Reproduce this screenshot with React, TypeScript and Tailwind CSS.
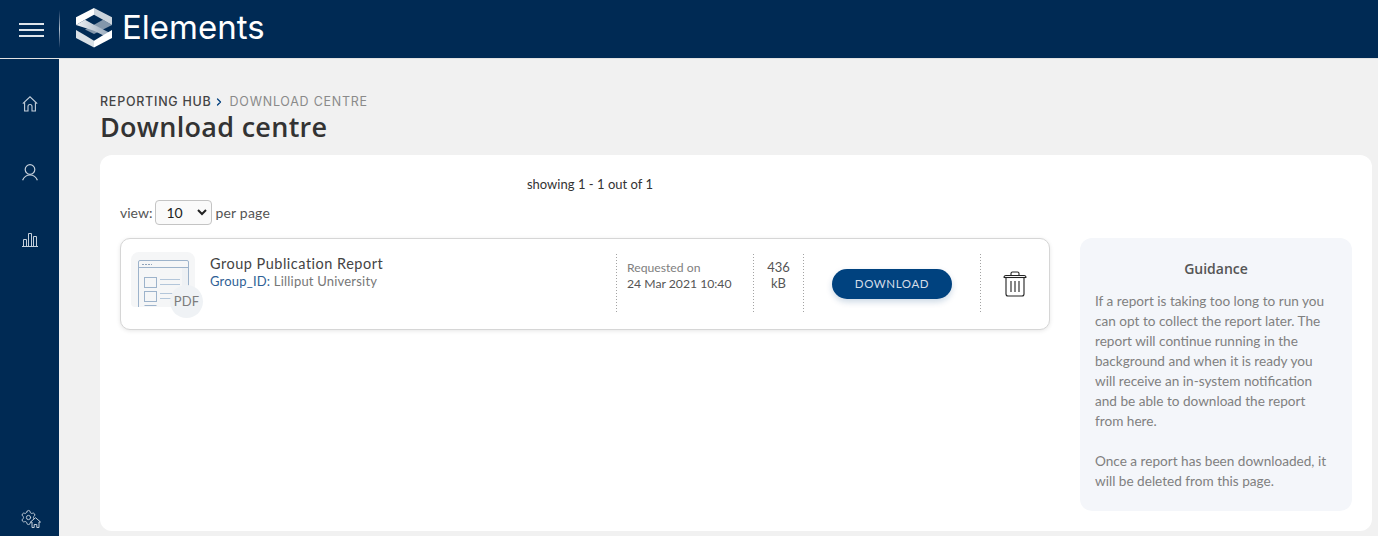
import React from 'react';
import { ChevronRight, Settings } from 'lucide-react';

const Logo = () => (
  <svg width="36" height="40" viewBox="0 0 36 40" className="shrink-0">
    <defs>
      <linearGradient id="band" x1="0" x2="1" y1="0" y2="0">
        <stop offset="0" stopColor="#f2f4f6" />
        <stop offset="1" stopColor="#8fa2b6" />
      </linearGradient>
    </defs>
    <path d="M36 17 L27 11.7 L18 16.7 L9 21.5 L18 26 Z" fill="#8397ab" />
    <path d="M18 0 L0 9.3 V17 L9 11.7 L18 6.7 Z" fill="#ffffff" />
    <path d="M18 0 L36 9.3 V17 L27 11.7 L18 6.7 Z" fill="#ccd5dd" />
    <path d="M0 17 L9 11.7 L18 16.7 L36 26 L27 27.3 L18 22.7 Z" fill="url(#band)" />
    <path d="M0 22 L9 27.3 L18 32.7 V39.5 L0 30 Z" fill="#d9e0e6" />
    <path d="M36 22 L27 27.3 L18 32.7 V39.5 L36 30 Z" fill="#ffffff" />
  </svg>
);

const HomeIcon = () => (
  <svg width="16" height="16" viewBox="0 0 16 16" fill="none" stroke="#c5d0db" strokeWidth="1.1">
    <path d="M0.8 7.6 L8 0.8 L15.2 7.6" />
    <path d="M2.6 6.2 V15 H6 V10.5 A2 2 0 0 1 10 10.5 V15 H13.4 V6.2" />
  </svg>
);

const UserIcon = () => (
  <svg width="16" height="17" viewBox="0 0 16 17" fill="none" stroke="#c5d0db" strokeWidth="1.2">
    <circle cx="8" cy="5.5" r="4.8" />
    <path d="M0.6 16.2 C2 12.8 4.6 11 8 11 C11.4 11 14 12.8 15.4 16.2" />
  </svg>
);

const ChartIcon = () => (
  <svg width="16" height="14" viewBox="0 0 16 14" fill="none" stroke="#c5d0db" strokeWidth="1">
    <path d="M0 13.5 H16" />
    <path d="M1.5 13.5 V6.5 H4.5 V13.5" />
    <path d="M6.5 13.5 V0.5 H9.5 V13.5" />
    <path d="M11.5 13.5 V3.5 H14.5 V13.5" />
  </svg>
);

const SettingsIcon = () => (
  <div className="relative w-[21px] h-[19px]">
    <Settings className="w-[17px] h-[17px] text-[#c5d0db]" strokeWidth={1.3} />
    <svg width="11" height="11" viewBox="0 0 11 11" className="absolute right-0 bottom-0" fill="#002a54" stroke="#c5d0db" strokeWidth="1">
      <path d="M0.5 5 L5.5 0.7 L10.5 5 L9 5 V10.5 H6.8 V7.5 H4.2 V10.5 H2 V5 Z" />
    </svg>
  </div>
);

const ReportThumb = () => (
  <div className="relative w-[64px] h-[56px] shrink-0 mt-[3px]">
    <div className="w-[64px] h-[55px] rounded-t-[8px] rounded-b-[4px] bg-[#f5f6f7] overflow-hidden">
      <svg width="64" height="55" viewBox="0 0 64 55" fill="none" stroke="#9db3cb" strokeWidth="1">
        <rect x="51" y="15" width="6" height="40" fill="#eef1f4" stroke="none" />
        <path d="M7.5 55 V10 Q7.5 8.5 9 8.5 H56 Q57.5 8.5 57.5 10 V55" />
        <path d="M7.5 15.5 H57.5" />
        <path d="M11 12.5 H21" strokeDasharray="2 1" stroke="#8fa3ba" />
        <rect x="13.5" y="25.5" width="12" height="10" />
        <rect x="13.5" y="39.5" width="12" height="10" />
        <path d="M29 27.5 H49 M29 32.5 H49 M29 41.5 H46 M29 46.5 H42" stroke="#b3c6da" />
        <path d="M13.5 53.5 H25.5" />
      </svg>
    </div>
    <div className="absolute left-[39px] top-[33px] w-[33px] h-[33px] rounded-full bg-[#eff2f5] flex items-center justify-center text-[13px] tracking-[0.2px] text-[#7d7d7d]">
      PDF
    </div>
  </div>
);

const TrashIcon = () => (
  <svg width="24" height="26" viewBox="0 0 24 26" fill="none" stroke="#222" strokeWidth="1.1">
    <path d="M1 6.5 Q1 4.5 3 4.5 H21 Q23 4.5 23 6.5" />
    <path d="M0.8 6.5 H23.2" />
    <path d="M8 4.5 V2.5 Q8 1 9.5 1 H14.5 Q16 1 16 2.5 V4.5" />
    <path d="M3 6.5 V23 Q3 25 5 25 H19 Q21 25 21 23 V6.5" />
    <path d="M8 10 V21 M12 10 V21 M16 10 V21" />
  </svg>
);

const Divider = () => (
  <div className="w-px h-[58px] bg-[repeating-linear-gradient(to_bottom,#a3a3a3_0,#a3a3a3_1px,transparent_1px,transparent_3px)]" />
);

const App: React.FC = () => {
  return (
    <div className="h-[536px] overflow-hidden flex flex-col bg-[#f1f1f1] font-['Lato','Noto_Sans',sans-serif]">
      {/* Top bar */}
      <header className="h-[58px] shrink-0 bg-[#002a54] flex items-center">
        <div className="w-[59px] flex flex-col items-center gap-[4px] pl-[3px] pt-[1px]">
          <span className="w-[25px] h-[2px] bg-[#dfe5eb]" />
          <span className="w-[25px] h-[2px] bg-[#dfe5eb]" />
          <span className="w-[25px] h-[2px] bg-[#dfe5eb]" />
        </div>
        <div className="w-px h-[38px] bg-gradient-to-b from-[#002a54] via-[#b9c5d1] to-[#002a54]" />
        <div className="ml-[16px] mt-[-3px]">
          <Logo />
        </div>
        <span className="ml-[10px] mt-[-4px] text-[33px] leading-none text-white font-['Inter',sans-serif]">Elements</span>
      </header>

      <div className="flex-1 flex min-h-0 border-t border-[#e2e2e2]">
        {/* Sidebar */}
        <aside className="w-[59px] shrink-0 bg-[#002a54] flex flex-col items-center pt-[37px] pb-[8px] pl-[1px]">
          <HomeIcon />
          <div className="mt-[52px]">
            <UserIcon />
          </div>
          <div className="mt-[52px]">
            <ChartIcon />
          </div>
          <div className="mt-auto">
            <SettingsIcon />
          </div>
        </aside>

        {/* Main */}
        <main className="flex-1 min-w-0 pl-[41px] pr-[6px] pt-[35px] pb-[5px] flex flex-col">
          <div className="flex items-center h-[16px] text-[12.5px] tracking-[0.75px] font-['Inter',sans-serif]">
            <span className="font-medium text-[#444]">REPORTING HUB</span>
            <ChevronRight className="w-[12px] h-[12px] ml-[1px] mr-[5px] text-[#003f7d]" strokeWidth={2.5} />
            <span className="text-[#8a8a8a]">DOWNLOAD CENTRE</span>
          </div>
          <h1 className="mt-[-2px] h-[39px] leading-[37px] text-[27px] font-semibold tracking-[0.3px] text-[#333] font-['Open_Sans',sans-serif]">Download centre</h1>
          <section className="mt-[8px] flex-1 bg-white rounded-[12px] px-[20px] pt-[20px] pb-[20px] flex gap-[30px]">
            <div className="w-[930px] shrink-0">
              <p className="h-[18px] leading-[18px] text-center w-[940px] text-[13px] tracking-[0.02px] text-[#333]">showing 1 - 1 out of 1</p>
              <div className="mt-[7px] h-[25px] flex items-center text-[14px] text-[#555]">
                <span>view:</span>
                <div className="ml-[3px] w-[57px] h-[25px] rounded-[4px] border border-[#c4c4c4] bg-[#fafafa] flex items-center justify-between pl-[10px] pr-[4px] text-[#222]">
                  <span>10</span>
                  <svg width="10" height="7" viewBox="0 0 10 7" fill="none" stroke="#222" strokeWidth="2">
                    <path d="M1 1 L5 5 L9 1" />
                  </svg>
                </div>
                <span className="ml-[3px] tracking-[0.2px]">per page</span>
              </div>

              <div className="mt-[13px] h-[92px] rounded-[10px] border border-[#d6d6d6] shadow-[0_1px_4px_rgba(0,0,0,0.1)] bg-white flex items-start pl-[10px] pt-[10px]">
                <ReportThumb />
                <div className="ml-[15px] w-[406px] pt-[5px]">
                  <p className="text-[14.5px] leading-[20px] tracking-[0.5px] text-[#444]">Group Publication Report</p>
                  <p className="text-[13px] leading-[15px] tracking-[0.2px] text-[#777]"><span className="text-[#2f5f95]">Group_ID:</span> Lilliput University</p>
                </div>
                <div className="mt-[5px] flex items-center">
                  <Divider />
                  <div className="w-[136px] pl-[10px] text-[12.2px] leading-[16px] pb-[14px]">
                    <p className="text-[#808080]">Requested on</p>
                    <p className="text-[#555] whitespace-nowrap">24 Mar 2021 10:40</p>
                  </div>
                  <Divider />
                  <div className="w-[49px] text-center text-[13px] leading-[16px] text-[#555] pb-[16px]">
                    <p>436</p>
                    <p>kB</p>
                  </div>
                  <Divider />
                  <div className="w-[176px] flex justify-center pt-[1px]">
                    <button className="w-[120px] h-[30px] rounded-full bg-[#00427f] text-[#d5dee8] text-[11.5px] tracking-[0.6px] shadow-[0_3px_6px_rgba(0,66,127,0.2)]">DOWNLOAD</button>
                  </div>
                  <Divider />
                  <div className="ml-[22px] mt-[2px]">
                    <TrashIcon />
                  </div>
                </div>
              </div>
            </div>

            <aside className="mt-[63px] flex-1 rounded-[12px] bg-[#f4f6fa] pl-[15px] pr-[20px] pt-[21px] text-[13.6px] leading-[20px] text-[#808080]">
              <h2 className="text-center pl-[5px] text-[14px] font-semibold text-[#555] font-['Open_Sans',sans-serif] mb-[12px]">Guidance</h2>
              <p>If a report is taking too long to run you can opt to collect the report later. The report will continue running in the background and when it is ready you will receive an in-system notification and be able to download the report from here.</p>
              <p className="mt-[20px]">Once a report has been downloaded, it will be deleted from this page.</p>
            </aside>
          </section>
        </main>
      </div>
    </div>
  );
};

export default App;
